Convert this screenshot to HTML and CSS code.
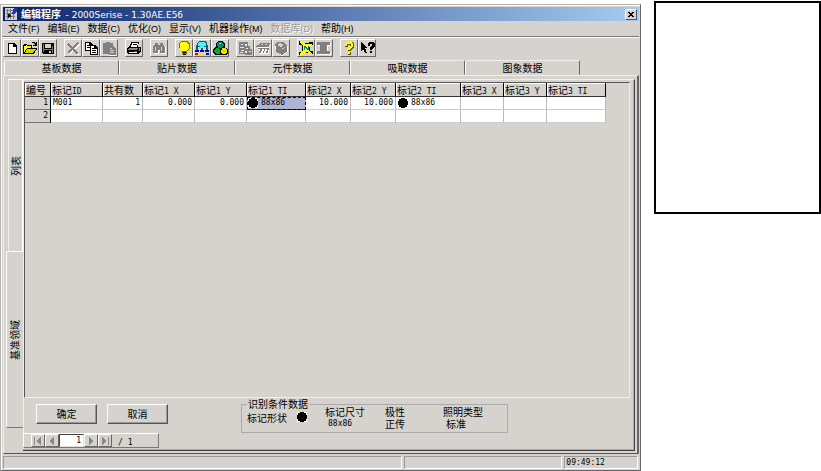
FILE: index.html
```html
<!DOCTYPE html>
<html lang="zh-CN">
<head>
<meta charset="utf-8">
<title>编辑程序 - 2000Serise - 1.30AE.E56</title>
<link rel="stylesheet" href="styles.css">
</head>
<body>
<main class="window">
  <header class="titlebar">
    <svg class="app-icon" viewBox="0 0 12 12" aria-hidden="true"><path fill="#d4d0c8" d="M0 0h12v12H0z"/><path fill="#778" d="M1 2h7v1H1zM1 5h6v1H1zM1 8h9v1H1zM2 1h1v10H2zM5 1h1v10H5zM8 6h1v5H8z"/><path fill="#1638b8" d="M9 0h3v3l-3 3H7l1-4z"/><path fill="#111" d="M3 6h2v1h1v2H4v1H3z"/></svg>
    <h1 class="title">编辑程序&nbsp; <span class="title-file">- 2000Serise - 1.30AE.E56</span></h1>
    <button class="close" aria-label="关闭"><svg viewBox="0 0 8 8"><path d="M1 1h2v1h2V1h2v1H6v1H5v2h1v1h1v1H5V6H3v1H1V6h1V5h1V3H2V2H1z"/></svg></button>
  </header>

  <nav class="menubar">
    <button class="menu">文件<span>(F)</span></button>
    <button class="menu">编辑<span>(E)</span></button>
    <button class="menu">数据<span>(C)</span></button>
    <button class="menu">优化<span>(O)</span></button>
    <button class="menu">显示<span>(V)</span></button>
    <button class="menu">机器操作<span>(M)</span></button>
    <button class="menu" disabled>数据库<span>(D)</span></button>
    <button class="menu">帮助<span>(H)</span></button>
  </nav>

  <div class="toolbar">
    <div class="tools">
      <button class="tool" aria-label="新建"><svg viewBox="0 0 16 16"><path fill="#000" d="M4 3h6l3 3v8H4z"/><path fill="#fff" d="M5 4h4v3h3v6H5z"/></svg></button>
      <button class="tool" aria-label="打开"><svg viewBox="0 0 16 16"><path fill="#000" d="M1 5h1V4h3v1h5v3h5v1l-3 5H1zM9 3h1V2h3v1h1V2h1v4h-4V5h2V4h-1V3z"/><path fill="#ff0" d="M2 6h2V5h1v1h4v2H5v1H4v1H3v2H2z"/><path fill="#dcd000" d="M5 9h9l-3 4H3z"/></svg></button>
      <button class="tool" aria-label="保存"><svg viewBox="0 0 16 16"><path fill="#000" d="M2 3h12v11H3l-1-1z"/><path fill="#d4d0c8" d="M5 4h6v4H5zM9 11h2v2H9z"/><path fill="#778" d="M3 4h1v8H3zM12 6h1v7h-1zM4 9h8v1H4z"/></svg></button>
    </div>
    <div class="tools">
      <button class="tool" aria-label="剪切" disabled><svg viewBox="0 0 16 16"><path fill="none" stroke="#fff" stroke-width="2" d="m4 5 10 10M14 4 4 14"/><path fill="none" stroke="#808080" stroke-width="2" d="m3 4 10 10M13 3 3 13"/></svg></button>
      <button class="tool" aria-label="复制"><svg viewBox="0 0 16 16"><path fill="#000" d="M2 2h5l3 3v6H2z"/><path fill="#fff" d="M3 3h3v3h3v4H3z"/><path fill="#000" d="M4 5h2v1H4zM4 7h4v1H4zM7 5h5l3 3v7H7z"/><path fill="#fff" d="M8 6h3v3h3v5H8z"/><path fill="#000" d="M9 8h2v1H9zM9 10h4v1H9zM9 12h4v1H9z"/></svg></button>
      <button class="tool" aria-label="粘贴" disabled><svg viewBox="0 0 16 16"><path fill="#808080" d="M2 3h3V2h4v1h3v11H2z"/><path fill="#fff" d="M8 7h4l3 3v6H8z"/><path fill="#808080" d="M8 6h4l3 3v6H8z"/><path fill="#d4d0c8" d="M9 8h2v1H9zM9 10h4v1H9zM9 12h4v1H9z"/></svg></button>
    </div>
    <div class="tools">
      <button class="tool" aria-label="打印"><svg viewBox="0 0 16 16"><path fill="#000" d="M5 2h8v2h-1v3h2l1 1v3l-2 3H2l-1-2V8l3-2z"/><path fill="#fff" d="M6 3h6l-1 4H5z"/><path fill="#888" d="M3 8h9l-1 2H2zM13 8h1v2l-1 2z"/><path fill="#fff" d="M3 12h8v1H3z"/><path fill="#d00" d="M8 11h3v1H8z"/><path fill="#000" d="M7 4h4v1H7z"/></svg></button>
    </div>
    <div class="tools">
      <button class="tool" aria-label="查找" disabled><svg viewBox="0 0 16 16"><path fill="#fff" d="M4 5h3v2h3V5h3v2h2v7h-5v-3H8v3H3z"/><path fill="#808080" d="M4 3h3v2h2V3h3v2h1l1 3v5h-5v-3H7v3H2V8l1-3h1z"/><path fill="#d4d0c8" d="M4 7h1v4H4zM10 7h1v4h-1z"/></svg></button>
    </div>
    <div class="tools">
      <button class="tool" aria-label="提示"><svg viewBox="0 0 16 16"><path fill="#786f00" d="M5 1h6l3 3v4l-3 3v3H6v-3L3 8V4z"/><path fill="#ff0" d="M5 2h5l3 3v3l-3 3H6L4 8V4z"/><path fill="#fff" d="M6 3h2v1H6v2H5V4h1z"/><path fill="#000" d="M7 14h3v1H7zM7 12h3v1H7z"/><path fill="#dd0" d="M1 1h1v1H1zM14 1h1v1h-1zM1 10h1v1H1zM14 10h1v1h-1z"/></svg></button>
      <button class="tool" aria-label="结构"><svg viewBox="0 0 16 16"><path fill="#066" d="M5 1h6l2 2v4H3V3zM2 5h2v5H2zM12 5h2v5h-2zM7 8h2v3H7z"/><path fill="#5ef" d="M5 2h5l2 2v2H4V3zM6 6h4v2H6z"/><path fill="#00c" d="M1 10h4v2H1zM6 10h4v2H6zM11 10h4v2h-4z"/><path fill="#e00" d="M1 13h3v2H1z"/><path fill="#ee0" d="M6 13h4v2H6z"/><path fill="#00c" d="M12 13h3v2h-3z"/></svg></button>
      <button class="tool" aria-label="元件"><svg viewBox="0 0 16 16"><path fill="#000" d="M6 1h5l2 3v4h2l1 2v3l-2 2H3l-2-2v-3l3-4V3z"/><path fill="#0a8c70" d="M6 2h4l2 3-2 3H6L5 4z"/><path fill="#00b020" d="M4 8h3l1 2v3l-1 1H4l-2-2v-2z"/><path fill="#5ef" d="M7 3h2v1H7z"/><path fill="#e8e000" d="M10 8h3l2 2v3l-2 1h-3l-1-2z"/></svg></button>
    </div>
    <div class="tools">
      <button class="tool" aria-label="基板库" disabled><svg viewBox="0 0 16 16"><path fill="#808080" d="M2 2h9v4h2v3h2v6H8v-1H2z"/><path fill="#e8e6e0" d="M4 4h2v1H4zM8 4h2v2H8zM3 7h4v1H3zM9 8h2v1H9zM4 10h3v1H4zM8 11h2v2H8zM12 11h2v1h-2zM3 12h3v1H3z"/></svg></button>
      <button class="tool" aria-label="元件库" disabled><svg viewBox="0 0 16 16"><path fill="#fff" d="M5 4h11l-2 4v6H4V9H2z"/><path fill="#808080" d="M5 3h10l-1 4H1l1-2h2zM2 8h12l-1 5h-2l1-4h-2l-1 4H8l1-4H7l-1 4H4l1-4H3z"/><path fill="#d4d0c8" d="M6 4h2v1H6zM10 4h2v1h-2z"/></svg></button>
      <button class="tool" aria-label="图象库" disabled><svg viewBox="0 0 16 16"><path fill="#fff" d="m2 6 6-3 7 3v6l-6 4-6-4z"/><path fill="#808080" d="m1 5 4-3h5l4 3v7l-5 3-6-3V7z"/><path fill="#d4d0c8" d="m4 5 3-2 4 2-3 2zM9 8l3-1v1L9 9z"/></svg></button>
    </div>
    <div class="tools">
      <button class="tool" aria-label="传送"><svg viewBox="0 0 16 16"><path fill="#000" d="M1 1h4v2h6V2h4v3h-3v6h3v3h-4v-1H5v2H1v-3h3V5H1z"/><path fill="#ff0" d="M2 1h3l2 3h7v1l-3 2v4l3 2v1h-3l-2-2-3 1-1 2H2v-1l3-4V6L2 3z"/><path fill="#087" d="M6 6h1l3 3V6h1v4H9L7 8v2H6z"/></svg></button>
      <button class="tool" aria-label="停止" disabled><svg viewBox="0 0 16 16"><path fill="#fff" d="M2 3h13v3h-3v6h3v3H2v-3h3V6H2z"/><path fill="#808080" d="M1 2h13v3h-3v6h3v3H1v-3h3V5H1z"/></svg></button>
    </div>
    <div class="tools">
      <button class="tool" aria-label="帮助"><svg viewBox="0 0 16 16"><path fill="#554f00" d="M5 2h6l2 2v3l-3 3v1H7V8l2-2V5H7v2H4V3zM7 12h3v3H7z"/><path fill="#ff0" d="M5 2h5l2 1v3L9 9v1H7V8l3-2V4H6v2H4V3zM7 12h2v2H7z"/></svg></button>
      <button class="tool" aria-label="上下文帮助"><svg viewBox="0 0 16 16"><path fill="#000" d="m2 2 6 6H6l2 5H6L4 9l-2 2zM10 2h4l2 2v2l-3 3v1h-2V7l2-2V4h-2v2H9V3zM11 11h2v2h-2z"/></svg></button>
    </div>
  </div>

  <div class="tabs" role="tablist">
    <button class="tab" role="tab">基板数据</button>
    <button class="tab tab-active" role="tab" aria-selected="true">贴片数据</button>
    <button class="tab" role="tab">元件数据</button>
    <button class="tab" role="tab">吸取数据</button>
    <button class="tab" role="tab">图象数据</button>
  </div>

  <section class="panel">
    <div class="side-tabs" role="tablist">
      <button class="side-tab" role="tab"><span>列表</span></button>
      <button class="side-tab side-active" role="tab" aria-selected="true"><span>基准领域</span></button>
    </div>
    <div class="content">
      <div class="sheet">
        <table class="grid">
          <colgroup><col class="w-no"><col class="w-id"><col class="w-count"><col class="w-pos"><col class="w-pos"><col class="w-type1"><col class="w-mid"><col class="w-mid"><col class="w-type2"><col class="w-small"><col class="w-small"><col class="w-type3"></colgroup>
          <thead>
            <tr><th>编号</th><th>标记<span>ID</span></th><th>共有数</th><th>标记<span>1 X</span></th><th>标记<span>1 Y</span></th><th>标记<span>1 TI</span></th><th>标记<span>2 X</span></th><th>标记<span>2 Y</span></th><th>标记<span>2 TI</span></th><th>标记<span>3 X</span></th><th>标记<span>3 Y</span></th><th>标记<span>3 TI</span></th></tr>
          </thead>
          <tbody>
            <tr><th>1</th><td>M001</td><td class="num">1</td><td class="num">0.000</td><td class="num">0.000</td><td class="picked"><div class="mark"><i class="dot"></i>88x86</div></td><td class="num">10.000</td><td class="num">10.000</td><td><div class="mark"><i class="dot"></i>88x86</div></td><td></td><td></td><td></td></tr>
            <tr><th>2</th><td></td><td></td><td></td><td></td><td></td><td></td><td></td><td></td><td></td><td></td><td></td></tr>
          </tbody>
        </table>
      </div>
      <div class="footer">
        <button class="action">确定</button>
        <button class="action">取消</button>
        <fieldset class="info">
          <legend>识别条件数据</legend>
          <div class="shape">标记形状<i class="dot"></i></div>
          <dl class="facts">
            <div><dt>标记尺寸</dt><dd class="mono">88x86</dd></div>
            <div><dt>极性</dt><dd>正传</dd></div>
            <div><dt>照明类型</dt><dd class="inset">标准</dd></div>
          </dl>
        </fieldset>
      </div>
      <div class="pager">
        <span class="grip"></span>
        <button class="step" aria-label="首条"><svg viewBox="0 0 10 10"><path d="M1 1h1v8H1zM8 1v8L3 5z"/></svg></button>
        <button class="step" aria-label="上一条"><svg viewBox="0 0 10 10"><path d="M7 1v8L2 5z"/></svg></button>
        <input class="page" type="text" value="1" aria-label="当前记录">
        <button class="step" aria-label="下一条"><svg viewBox="0 0 10 10"><path d="M3 1v8l5-4z"/></svg></button>
        <button class="step" aria-label="末条"><svg viewBox="0 0 10 10"><path d="M2 1v8l5-4zM8 1h1v8H8z"/></svg></button>
        <span class="total">/ 1</span>
      </div>
    </div>
  </section>

  <footer class="status">
    <span class="cell"></span>
    <span class="cell"></span>
    <span class="cell">09:49:12</span>
  </footer>
</main>
<aside class="note"></aside>
</body>
</html>
```
FILE: styles.css
```css
:root {
  --face: #d6d3ce;
  --lite: #fff;
  --mono: "DejaVu Sans Mono", monospace;
}

* {
  box-sizing: border-box;
}

body {
  margin: 0;
  min-height: 100vh;
  display: flex;
  align-items: flex-start;
  gap: 13px;
  background: #fff;
  color: #000;
  font: 10px/12px "Noto Sans CJK SC", sans-serif;
}

button {
  margin: 0;
  padding: 0;
  border: 0;
  background: var(--face);
  color: inherit;
  font: inherit;
  white-space: nowrap;
}

svg {
  display: block;
  shape-rendering: crispEdges;
}

.window {
  flex: 1;
  min-width: 0;
  min-height: calc(100vh - 4px);
  margin-top: 4px;
  display: flex;
  flex-direction: column;
  background: var(--face);
  border: 1px solid #b5b3af;
  border-right-color: #666;
  border-bottom-color: #666;
  box-shadow: inset 1px 1px var(--lite);
}

.note {
  flex: 0 0 167px;
  height: 213px;
  margin-top: 1px;
  border: 2px solid #000;
}

.titlebar {
  display: flex;
  align-items: center;
  gap: 4px;
  height: 14px;
  margin: 2px 1px 0 2px;
  padding: 0 2px;
  background: linear-gradient(90deg, #0a246a, #a6caf0);
  color: #fff;
}

.app-icon {
  width: 12px;
  height: 12px;
}

.title {
  flex: 1;
  margin: 0;
  font-size: 10px;
  line-height: 14px;
  white-space: nowrap;
}

.title-file {
  font-family: "DejaVu Sans", sans-serif;
  font-size: 9px;
  font-weight: 400;
}

.close {
  width: 12px;
  height: 11px;
  padding: 1px;
  border: 1px solid;
  border-color: #fff #555 #555 #fff;
}

.close svg {
  width: 8px;
  height: 7px;
}

.menubar {
  display: flex;
  gap: 8px;
  height: 16px;
  margin: 0 1px;
  padding-left: 6px;
  border-bottom: 1px solid #777;
  box-shadow: 0 1px #fff;
}

.menu {
  height: 13px;
  line-height: 13px;
}

.menu span {
  font: 9px "Liberation Sans", sans-serif;
}

.menu:disabled {
  color: #999;
  text-shadow: 1px 1px #fff;
}

.toolbar {
  display: flex;
  gap: 7px;
  padding: 2px 2px;
  height: 23px;
}

.tools {
  display: flex;
}

.tool {
  width: 18px;
  height: 18px;
  border: 1px solid;
  border-color: #fff #666 #666 #fff;
}

.tool svg {
  width: 16px;
  height: 16px;
}

.tabs {
  display: flex;
  height: 15px;
  padding: 0 3px;
}

.tab {
  flex: 0 1 115px;
  border: 1px solid;
  border-color: #eee #666 transparent #fff;
  border-radius: 2px 2px 0 0;
  line-height: 12px;
}

.tab-active {
  flex-basis: 116px;
  line-height: 10px;
}

.panel {
  flex: 1;
  display: flex;
  margin: 0 1px 0 2px;
  padding: 3px 2px 0 2px;
  border-top: 1px solid #eee;
  border-left: 1px solid #eee;
  border-right: 2px solid #666;
  border-bottom: 1px solid #555;
}

.side-tabs {
  display: grid;
  grid-template-rows: 172fr 177fr;
  width: 17px;
  margin-bottom: 25px;
}

.side-tab {
  display: flex;
  justify-content: center;
  align-items: center;
  margin-left: 2px;
  border-top: 1px solid #fff;
  border-left: 1px solid #eee;
  border-right: 1px solid #fff;
}

.side-active {
  margin-left: 0;
  border-left-color: #fff;
  border-right: 0;
  border-bottom: 1px solid #777;
}

.side-tab span {
  writing-mode: vertical-rl;
  text-orientation: sideways;
  transform: rotate(180deg);
}

.content {
  flex: 1;
  min-width: 0;
  display: flex;
  flex-direction: column;
  margin-bottom: 2px;
  border-top: 1px solid #eee;
  border-right: 1px solid #444;
  border-bottom: 1px solid #444;
  box-shadow: inset -1px -1px #aaa, inset 1px 0 #eee;
}

.sheet {
  flex: 1;
  margin: 2px 4px 0 1px;
  background: var(--face);
  border: 1px solid;
  border-color: #555 #eee #eee #555;
}

.grid {
  width: 581px;
  max-width: 100%;
  table-layout: fixed;
  border-collapse: separate;
  border-spacing: 0;
  background: #fff;
  font: 8px/12px var(--mono);
}

.grid th,
.grid td {
  height: 13px;
  padding: 0 2px;
  text-align: left;
  font-weight: 400;
  white-space: nowrap;
  border-right: 1px solid #bbb;
  border-bottom: 1px solid #ccc;
}

.grid thead th {
  height: 14px;
  padding: 0 1px;
  background: var(--face);
  border-right-color: #000;
  border-bottom-color: #333;
  box-shadow: inset 1px 1px #fff;
  font: 10px/12px "Noto Sans CJK SC", sans-serif;
}

.grid thead span {
  font: 8px var(--mono);
}

.grid tbody th {
  background: var(--face);
  text-align: right;
  border-right-color: #000;
  border-bottom-color: #777;
}

.grid .num {
  text-align: right;
}

.grid .picked {
  padding: 0 1px;
  background: #adb3d3;
  border-bottom-color: #333;
  outline: 1px dashed #000;
  outline-offset: -1px;
}

.w-no { width: 26px; }
.w-id { width: 52px; }
.w-count { width: 40px; }
.w-pos { width: 52px; }
.w-type1 { width: 59px; }
.w-mid { width: 45px; }
.w-type2 { width: 65px; }
.w-small { width: 43px; }
.w-type3 { width: 59px; }

.mark {
  display: flex;
  align-items: center;
  gap: 3px;
}

.dot {
  width: 10px;
  height: 10px;
  background: radial-gradient(circle, #000 5px, #fff 5px);
}

.footer {
  display: flex;
  align-items: flex-start;
  gap: 10px;
  height: 35px;
  padding-left: 13px;
}

.action {
  width: 61px;
  height: 20px;
  margin-top: 6px;
  border: 1px solid;
  border-color: #fff #555 #555 #fff;
  box-shadow: inset -1px -1px #999;
}

.info {
  display: flex;
  gap: 18px;
  width: 267px;
  height: 35px;
  margin: 0 0 0 63px;
  padding: 0 5px;
  border: 1px solid #aaa;
}

.info legend {
  padding: 0 1px;
  line-height: 12px;
}

.shape {
  display: flex;
  gap: 10px;
  margin-top: 2px;
}

.facts {
  display: flex;
  gap: 20px;
  margin: -4px 0 0;
}

.facts div:last-child {
  margin-left: 18px;
}

.facts dd {
  margin: 0;
}

.facts .inset {
  padding-left: 3px;
}

.facts .mono {
  padding-left: 3px;
  font: 8px/12px var(--mono);
}

.pager {
  display: flex;
  width: 136px;
  height: 15px;
  margin: 0 0 2px;
  border: 1px solid;
  border-color: #fff #777 #777 #fff;
}

.grip {
  width: 7px;
}

.step {
  width: 14px;
  padding: 1px;
  border: 1px solid;
  border-color: #fff #666 #666 #fff;
}

.step svg {
  width: 10px;
  height: 10px;
  fill: #888;
}

.page {
  width: 25px;
  padding: 0 2px;
  border: 1px solid;
  border-color: #444 #ddd #ddd #444;
  background: #fff;
  font: 8px var(--mono);
  text-align: right;
}

.total {
  padding: 3px 6px 0;
  font: 8px/12px var(--mono);
}

.status {
  display: grid;
  grid-template-columns: 401fr 159fr 74fr;
  gap: 2px;
  height: 14px;
  margin: 2px 2px 0;
}

.cell {
  height: 13px;
  border: 1px solid;
  border-color: #999 #fff #fff #999;
  padding-left: 1px;
  font: 8px/11px var(--mono);
}
```
